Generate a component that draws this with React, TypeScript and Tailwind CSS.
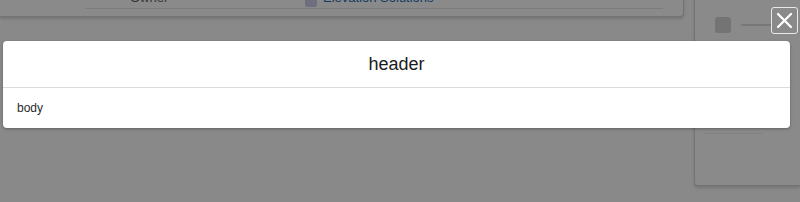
export default function App() {
  return (
    <div
      className="relative h-[202px] w-[800px] overflow-hidden bg-[#fdfdfd]"
      style={{ fontFamily: '"Liberation Sans", Arial, sans-serif' }}
    >
      {/* page behind the modal */}
      <div className="flex items-start">
        <div className="-mt-[20px] h-[37px] w-[684px] rounded-br-[4px] border-r border-b border-[#d4d4d4] bg-white shadow-[0_2px_3px_rgba(0,0,0,0.15)]">
          <div className="ml-[85px] mr-[20px] flex h-[29px] items-end border-b border-[#e6e6e6] pb-[1px] text-[13px]">
            <span className="ml-[45px] w-[175px] text-[#666]">Owner</span>
            <span className="mr-[6px] h-[12px] w-[12px] rounded-[2px] bg-[#c9cde9]" />
            <span className="text-[#1f6fb8]">Elevation Solutions</span>
          </div>
        </div>
        <div className="ml-[10px] -mt-[10px] h-[196px] flex-1 rounded-bl-[4px] border-l border-b border-[#d4d4d4] bg-white shadow-[0_2px_3px_rgba(0,0,0,0.15)]">
          <div className="mt-[27px] ml-[20px] flex items-center gap-[10px]">
            <span className="h-[16px] w-[16px] rounded-[3px] bg-[#d6d6d6]" />
            <span className="h-[2px] w-[30px] bg-[#dedede]" />
          </div>
          <div className="mt-[100px] ml-[8px] h-[1px] w-[60px] bg-[#ececec]" />
        </div>
      </div>

      {/* overlay */}
      <div className="absolute inset-0 bg-[rgba(0,0,0,0.46)]">
        <button className="absolute top-[7px] right-[2px] flex h-[27px] w-[27px] items-center justify-center rounded-[3px] border border-white/80 text-white">
          <svg width="19" height="19" viewBox="0 0 19 19" fill="none" stroke="white" strokeWidth="2.2" strokeLinecap="round">
            <path d="M3 3 L16 16 M16 3 L3 16" />
          </svg>
        </button>

        <div className="ml-[3px] mt-[41px] w-[787px] rounded-[4px] bg-white shadow-[0_1px_3px_rgba(0,0,0,0.3)]">
          <div className="flex h-[47px] items-center justify-center border-b border-[#dcdcdc] text-[18px] text-[#1b1b1b]">
            header
          </div>
          <div className="flex h-[40px] items-center px-[14px] text-[12px] text-[#2a2a2a]">body</div>
        </div>
      </div>
    </div>
  );
}
